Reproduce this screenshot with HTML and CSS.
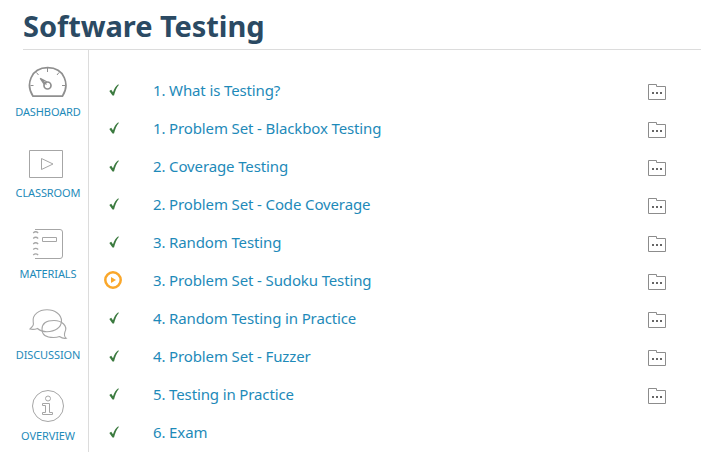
FILE: index.html
```html
<!DOCTYPE html>
<html lang="en">
<head>
<meta charset="utf-8">
<title>Software Testing</title>
<link rel="stylesheet" href="styles.css">
</head>
<body>
<svg class="symbols" aria-hidden="true">
  <symbol id="check" viewBox="0 0 10 12"><path d="M.3 6.9 2.2 5.8 4 8.3C5.200 4.800 6.800 2 9.300.3L9.800 1C7.600 3.500 6.100 7.200 5 11.600H3.500Z" fill="#3b7a3f"/></symbol>
  <symbol id="folder" viewBox="0 0 18 16"><path d="M.5 15.500V.5h8v2h9v13Z" fill="none" stroke="#8c8c8c"/><path d="M4 8h2v2H4zM8 8h2v2H8zM12 8h2v2h-2z" fill="#666"/></symbol>
</svg>
<h1 class="title">Software Testing</h1>
<div class="layout">
  <nav class="sidebar">
    <a class="nav-item dashboard" href="#"><svg class="nav-icon" viewBox="0 0 40 34" fill="none" stroke="#8f8f8f"><path d="M5 31.200C-2.500 20 2.500 2.700 19.700 2.700S41.900 20 34.400 31.200Z" stroke-width="1.700"/><path d="M19.500 3v4M8.500 7.500l2 2.500M31 7.500l-2 2.500M2.500 20.500h3M34 20.500h3"/><circle cx="19.500" cy="20.500" r="3.500" stroke-width="1.700"/><path d="m16.200 19.500-4-6.200 6.500 3.500M12.500 13.500l6 6" stroke-width="1.200"/></svg><span>DASHBOARD</span></a>
    <a class="nav-item classroom" href="#"><svg class="nav-icon" viewBox="0 0 40 34" fill="none" stroke="#a6a6a6"><path d="M1.500 4.500h33v27h-33z"/><path d="m13.500 12.500 11.500 5.500-11.500 5.500Z"/></svg><span>CLASSROOM</span></a>
    <a class="nav-item materials" href="#"><svg class="nav-icon" viewBox="0 0 40 34" fill="none" stroke="#a6a6a6"><path d="M7 2.500h25q2.500 0 2.500 2.500v24q0 2.500-2.500 2.500H7M14.500 10.500h14v4h-14z"/><path d="M5.200 6q2.500-2.500 5 0M5.200 11.500q2.500-2.500 5 0M5.200 17q2.500-2.500 5 0M5.200 22.500q2.500-2.500 5 0M5.200 28q2.500-2.500 5 0" stroke-width="1.200"/></svg><span>MATERIALS</span></a>
    <a class="nav-item discussion" href="#"><svg class="nav-icon" viewBox="0 0 40 34" fill="none" stroke="#a6a6a6" stroke-width="1.100"><path d="M2 21C5 18 6 17 5.200 14 4 6.500 11 1.800 19 1.800S33.500 6.500 33.500 13 27 23.700 19 23.700Q13 23.700 9.500 20.500 5.500 22 2 21Z"/><path d="M38.200 30.200C36.500 29 36 27 36.900 24 40 18 34 12.500 26 12.500S14 16 14 21.200 18 29.500 25.500 29.500Q29 29.500 31.500 28.500 35 31 38.200 30.200Z"/></svg><span>DISCUSSION</span></a>
    <a class="nav-item overview" href="#"><svg class="nav-icon" viewBox="0 0 40 34" fill="none" stroke="#a6a6a6"><circle cx="20" cy="17" r="15.500"/><circle cx="20" cy="9.500" r="2.500"/><path d="M14.500 14.500h7v9h3v2h-10v-2h3v-7h-3Z"/></svg><span>OVERVIEW</span></a>
  </nav>
  <main class="lessons">
    <div class="row"><svg class="check"><use href="#check"/></svg><a class="lesson" href="#">1. What is Testing?</a><svg class="folder"><use href="#folder"/></svg></div>
    <div class="row"><svg class="check"><use href="#check"/></svg><a class="lesson" href="#">1. Problem Set - Blackbox Testing</a><svg class="folder"><use href="#folder"/></svg></div>
    <div class="row"><svg class="check"><use href="#check"/></svg><a class="lesson" href="#">2. Coverage Testing</a><svg class="folder"><use href="#folder"/></svg></div>
    <div class="row"><svg class="check"><use href="#check"/></svg><a class="lesson" href="#">2. Problem Set - Code Coverage</a><svg class="folder"><use href="#folder"/></svg></div>
    <div class="row"><svg class="check"><use href="#check"/></svg><a class="lesson" href="#">3. Random Testing</a><svg class="folder"><use href="#folder"/></svg></div>
    <div class="row"><svg class="current" viewBox="0 0 18 18"><circle cx="9" cy="9" r="7.700" fill="none" stroke="#faa72a" stroke-width="2.500"/><path d="m7 6 5 3-5 3Z" fill="#faa72a"/></svg><a class="lesson" href="#">3. Problem Set - Sudoku Testing</a><svg class="folder"><use href="#folder"/></svg></div>
    <div class="row"><svg class="check"><use href="#check"/></svg><a class="lesson" href="#">4. Random Testing in Practice</a><svg class="folder"><use href="#folder"/></svg></div>
    <div class="row"><svg class="check"><use href="#check"/></svg><a class="lesson" href="#">4. Problem Set - Fuzzer</a><svg class="folder"><use href="#folder"/></svg></div>
    <div class="row"><svg class="check"><use href="#check"/></svg><a class="lesson" href="#">5. Testing in Practice</a><svg class="folder"><use href="#folder"/></svg></div>
    <div class="row"><svg class="check"><use href="#check"/></svg><a class="lesson" href="#">6. Exam</a></div>
  </main>
</div>
</body>
</html>
```
FILE: styles.css
```css
* { box-sizing: border-box; }
body { margin: 0; height: 452px; overflow: hidden; background: #fff; font-family: "Noto Sans", "Open Sans", sans-serif; }
a { color: #1e8ab9; text-decoration: none; }
svg { display: block; flex: none; }
.symbols { display: none; }
.title { height: 50px; margin: 0 0 0 23px; padding-top: 6px; border-bottom: 1px solid #dcdcdc; color: #2b4a63; font-size: 29px; line-height: 40px; letter-spacing: -0.05px; white-space: nowrap; }
.layout { display: flex; height: 402px; }
.sidebar { width: 89px; padding-top: 15px; border-right: 1px solid #dcdcdc; }
.nav-item { display: flex; flex-direction: column; height: 81px; padding-left: 28px; font-size: 11px; line-height: 16px; letter-spacing: -0.1px; }
.nav-icon { width: 40px; height: 34px; margin-bottom: 5px; }
.nav-item span { width: 80px; margin-left: -20px; text-align: center; white-space: nowrap; }
.lessons { flex: 1; padding-top: 21px; }
.row { display: grid; grid-template-columns: 49px 495px 18px; align-items: center; height: 38px; padding-left: 15px; }
.check { width: 10px; height: 12px; margin-left: 5px; }
.current { width: 18px; height: 18px; }
.lesson { font-size: 15px; line-height: 20px; letter-spacing: -0.13px; white-space: nowrap; }
.folder { width: 18px; height: 16px; margin-top: 4px; }
```
